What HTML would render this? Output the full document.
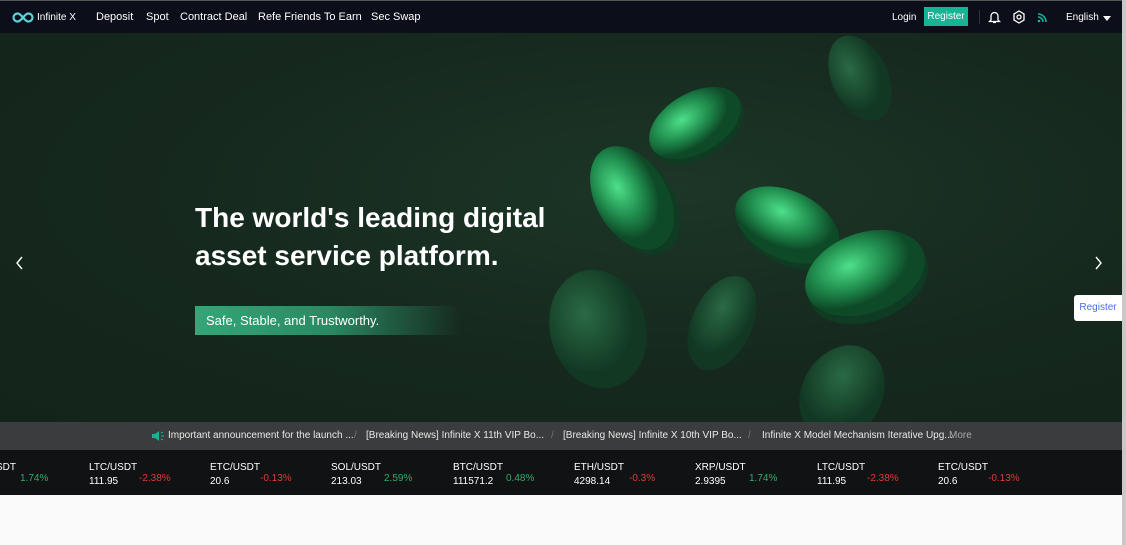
<!DOCTYPE html>
<html><head><meta charset="utf-8"><style>
*{margin:0;padding:0;box-sizing:border-box}
body{width:1126px;height:545px;overflow:hidden;background:#fafafa;font-family:"Liberation Sans",Arial,sans-serif;position:relative}
.nav{position:absolute;left:0;top:0;width:1122px;height:33px;background:#0c0e1a;border-top:1px solid #555;color:#fff;font-size:11px}
.nav span{position:absolute;top:10px;white-space:nowrap}
.hero{position:absolute;left:0;top:33px;width:1122px;height:389px;background:radial-gradient(ellipse at 60% 40%,#1c3627 0%,#16291e 50%,#13241a 100%);overflow:hidden}
.news{position:absolute;left:0;top:422px;width:1122px;height:28px;background:#3b3c3d;color:#e8e8e8;font-size:10px}
.news span{position:absolute;top:8px;white-space:nowrap;line-height:12px}
.tick{position:absolute;left:0;top:450px;width:1122px;height:45px;background:#111213;color:#fff;font-size:10px}
.tick div{position:absolute}
.g{color:#2fae6a}.r{color:#e23b3b}
.sb{position:absolute;right:0;top:0;width:4px;height:545px;background:#c8c8c8}
</style></head><body>
<div class="nav">
<svg style="position:absolute;left:12px;top:11px" width="22" height="11" viewBox="0 0 22 11"><path d="M6 1.5C3 1.5 1.5 3.5 1.5 5.5S3 9.5 6 9.5C9 9.5 13 1.5 16 1.5S20.5 3.5 20.5 5.5 19 9.5 16 9.5C13 9.5 9 1.5 6 1.5Z" fill="none" stroke="#5fd0d8" stroke-width="2.2"/></svg>
<span style="left:37px;font-size:10px;top:11px">Infinite X</span>
<span style="left:96px">Deposit</span><span style="left:146px">Spot</span><span style="left:180px">Contract Deal</span><span style="left:258px">Refe Friends To Earn</span><span style="left:371px">Sec Swap</span>
<span style="left:892px;font-size:10px;top:11px">Login</span>
<div style="position:absolute;left:924px;top:6px;width:44px;height:19px;background:#16b394;font-size:10px;text-align:center;padding-top:4px">Register</div>
<div style="position:absolute;left:979px;top:9px;width:1px;height:14px;background:#333"></div>
<svg style="position:absolute;left:988px;top:9px" width="13" height="14" viewBox="0 0 13 14"><path d="M3 10V6a3.5 3.5 0 0 1 7 0v4l1.5 1.5h-10ZM5 12.5h3" fill="none" stroke="#fff" stroke-width="1.3"/></svg>
<svg style="position:absolute;left:1012px;top:9px" width="14" height="14" viewBox="0 0 14 14"><path d="M7 1l5 3v6l-5 3-5-3V4Z" fill="none" stroke="#fff" stroke-width="1.3"/><circle cx="7" cy="7" r="2" fill="none" stroke="#fff" stroke-width="1.3"/></svg>
<svg style="position:absolute;left:1037px;top:10px" width="12" height="12" viewBox="0 0 12 12"><path d="M1 3a8 8 0 0 1 8 8M1 6a5 5 0 0 1 5 5" fill="none" stroke="#16b394" stroke-width="1.6"/><circle cx="2" cy="10" r="1.3" fill="#16b394"/></svg>
<span style="left:1066px;font-size:10px;top:11px">English</span>
<div style="position:absolute;left:1103px;top:15px;border-left:4px solid transparent;border-right:4px solid transparent;border-top:5px solid #fff"></div>
</div>
<div class="hero">
<svg style="position:absolute;left:0;top:0" width="1122" height="389">
<defs><radialGradient id="c" cx="40%" cy="35%"><stop offset="0" stop-color="#4ee08a"/><stop offset="0.6" stop-color="#1f8a4c"/><stop offset="1" stop-color="#0e4a28"/></radialGradient>
<radialGradient id="d" cx="40%" cy="35%"><stop offset="0" stop-color="#2a6a45"/><stop offset="1" stop-color="#123823"/></radialGradient></defs>
<ellipse cx="860" cy="45" rx="28" ry="45" transform="rotate(-25 860 45)" fill="url(#d)"/>
<ellipse cx="698" cy="95" rx="50" ry="30" transform="rotate(-30 698 95)" fill="#0e3b22"/>
<ellipse cx="695" cy="90" rx="50" ry="30" transform="rotate(-30 695 90)" fill="url(#c)"/>
<ellipse cx="638" cy="170" rx="36" ry="56" transform="rotate(-30 638 170)" fill="#0e3b22"/>
<ellipse cx="632" cy="165" rx="36" ry="56" transform="rotate(-30 632 165)" fill="url(#c)"/>
<ellipse cx="790" cy="198" rx="55" ry="34" transform="rotate(25 790 198)" fill="#0e3b22"/>
<ellipse cx="787" cy="192" rx="55" ry="34" transform="rotate(25 787 192)" fill="url(#c)"/>
<ellipse cx="868" cy="248" rx="62" ry="40" transform="rotate(-20 868 248)" fill="#0e3b22"/>
<ellipse cx="865" cy="240" rx="62" ry="40" transform="rotate(-20 865 240)" fill="url(#c)"/>
<ellipse cx="598" cy="296" rx="48" ry="60" transform="rotate(-15 598 296)" fill="url(#d)"/>
<ellipse cx="722" cy="290" rx="30" ry="50" transform="rotate(25 722 290)" fill="url(#d)"/>
<ellipse cx="842" cy="360" rx="40" ry="50" transform="rotate(30 842 360)" fill="url(#d)"/>
<path d="M22 224l-5 6 5 6M1096 224l5 6-5 6" fill="none" stroke="#fff" stroke-width="1.4"/>
</svg>
<div style="position:absolute;left:195px;top:166px;color:#fff;font-family:'Liberation Sans',sans-serif;font-weight:bold;font-size:28px;line-height:38px;white-space:nowrap">The world's leading digital<br>asset service platform.</div>
<div style="position:absolute;left:195px;top:273px;width:265px;height:29px;background:linear-gradient(90deg,#34a678 0%,#2a8a62 50%,rgba(40,110,80,0) 100%);color:#fff;font-size:13px;line-height:29px;padding-left:11px">Safe, Stable, and Trustworthy.</div>
<div style="position:absolute;left:1074px;top:262px;width:48px;height:26px;background:#fff;border-radius:3px 0 0 3px;color:#4a6ee0;font-size:10px;line-height:26px;text-align:center">Register</div>
</div>
<div class="news">
<svg style="position:absolute;left:152px;top:9px" width="12" height="10" viewBox="0 0 12 10"><path d="M0 3h3l4-3v10L3 7H0Z" fill="#16b394"/><path d="M9 2l2-1M9 5h3M9 8l2 1" stroke="#16b394"/></svg>
<span style="left:168px">Important announcement for the launch ...</span>
<span style="left:354px;color:#777">/</span>
<span style="left:366px">[Breaking News] Infinite X 11th VIP Bo...</span>
<span style="left:551px;color:#777">/</span>
<span style="left:563px">[Breaking News] Infinite X 10th VIP Bo...</span>
<span style="left:748px;color:#777">/</span>
<span style="left:762px">Infinite X Model Mechanism Iterative Upg...</span>
<span style="left:949px;color:#aaa">More</span>
</div>
<div class="tick">
<div style="left:-4px;top:12px">SDT</div><div class="g" style="left:20px;top:23px">1.74%</div>
<div style="left:89px;top:12px">LTC/USDT</div><div style="left:89px;top:26px">111.95</div><div class="r" style="left:139px;top:23px">-2.38%</div>
<div style="left:210px;top:12px">ETC/USDT</div><div style="left:210px;top:26px">20.6</div><div class="r" style="left:260px;top:23px">-0.13%</div>
<div style="left:331px;top:12px">SOL/USDT</div><div style="left:331px;top:26px">213.03</div><div class="g" style="left:384px;top:23px">2.59%</div>
<div style="left:453px;top:12px">BTC/USDT</div><div style="left:453px;top:26px">111571.2</div><div class="g" style="left:506px;top:23px">0.48%</div>
<div style="left:574px;top:12px">ETH/USDT</div><div style="left:574px;top:26px">4298.14</div><div class="r" style="left:629px;top:23px">-0.3%</div>
<div style="left:695px;top:12px">XRP/USDT</div><div style="left:695px;top:26px">2.9395</div><div class="g" style="left:749px;top:23px">1.74%</div>
<div style="left:817px;top:12px">LTC/USDT</div><div style="left:817px;top:26px">111.95</div><div class="r" style="left:867px;top:23px">-2.38%</div>
<div style="left:938px;top:12px">ETC/USDT</div><div style="left:938px;top:26px">20.6</div><div class="r" style="left:988px;top:23px">-0.13%</div>
</div>
<div class="sb"></div>
</body></html>
